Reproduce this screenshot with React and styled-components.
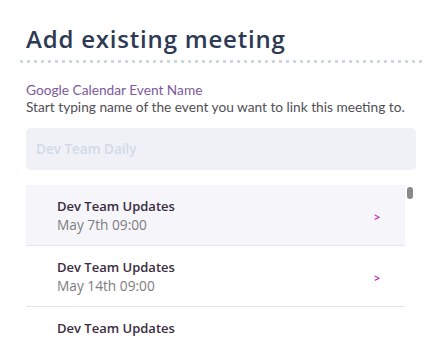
import React from 'react';
import styled, { createGlobalStyle } from 'styled-components';

const GlobalStyle = createGlobalStyle`
    html, body {
        margin: 0;
        padding: 0;
        background: #ffffff;
    }
    body {
        font-family: 'Lato', 'Open Sans', sans-serif;
    }
`;

const Page = styled.div`
    height: 351px;
    overflow: hidden;
    padding: 22px 27px 0 26px;
    box-sizing: border-box;
`;

const Title = styled.h1`
    font-family: 'Open Sans', sans-serif;
    font-weight: 600;
    font-size: 24px;
    letter-spacing: 0.8px;
    color: #2d3a55;
    margin: 0;
    line-height: 34px;
`;

const Divider = styled.div`
    margin: 4px -8px 0 -8px;
    height: 3px;
    background-image: radial-gradient(circle, #cdd7e3 1.4px, transparent 1.6px);
    background-size: 7px 3px;
    background-repeat: repeat-x;
`;

const Label = styled.div`
    margin-top: 18px;
    font-size: 13.7px;
    line-height: 17px;
    color: #7d5a9c;
`;

const Hint = styled.div`
    font-size: 13.7px;
    line-height: 17px;
    color: #4f4f55;
`;

const SearchInput = styled.input`
    display: block;
    box-sizing: border-box;
    width: 100%;
    height: 42px;
    margin-top: 13px;
    border: none;
    border-radius: 5px;
    background: #f0f1f7;
    padding: 0 10px;
    font-family: 'Open Sans', sans-serif;
    font-weight: 600;
    font-size: 13.5px;
    color: #333;
    outline: none;

    &::placeholder {
        color: #d2d9e7;
    }
`;

const ListArea = styled.div`
    display: flex;
    margin-top: 15px;
`;

const List = styled.div`
    flex: 1;
    display: flex;
    flex-direction: column;
    height: 151px;
    overflow: hidden;
`;

const Item = styled.div`
    flex: none;
    display: flex;
    align-items: center;
    justify-content: space-between;
    height: 60px;
    padding: 0 25px 0 31px;
    background: ${p => (p.$active ? '#f6f5fa' : '#ffffff')};
    border-bottom: 1px solid #e6e5ea;
`;

const ItemText = styled.div`
    display: flex;
    flex-direction: column;
`;

const ItemName = styled.span`
    font-family: 'Open Sans', sans-serif;
    font-weight: 600;
    font-size: 13px;
    line-height: 18px;
    color: #3b2c40;
`;

const ItemDate = styled.span`
    font-family: 'Open Sans', sans-serif;
    font-size: 13.7px;
    line-height: 19px;
    color: #7d7d80;
`;

const Chevron = styled.span`
    font-family: 'Open Sans', sans-serif;
    font-weight: 700;
    font-size: 10px;
    color: #c42db9;
    margin-top: 4px;
`;

const Track = styled.div`
    width: 11px;
    padding: 2px 0 0 2px;
    box-sizing: border-box;
`;

const Thumb = styled.div`
    width: 6px;
    height: 12px;
    border-radius: 3px;
    background: #8a8a8a;
`;

const events = [
    { name: 'Dev Team Updates', date: 'May 7th 09:00' },
    { name: 'Dev Team Updates', date: 'May 14th 09:00' },
    { name: 'Dev Team Updates', date: 'May 21st 09:00' },
];

const App = () => (
    <>
        <GlobalStyle />
        <Page>
            <Title>Add existing meeting</Title>
            <Divider />
            <Label>Google Calendar Event Name</Label>
            <Hint>Start typing name of the event you want to link this meeting to.</Hint>
            <SearchInput placeholder="Dev Team Daily" />
            <ListArea>
                <List>
                    {events.map((ev, i) => (
                        <Item key={i} $active={i === 0}>
                            <ItemText>
                                <ItemName>{ev.name}</ItemName>
                                <ItemDate>{ev.date}</ItemDate>
                            </ItemText>
                            <Chevron>&gt;</Chevron>
                        </Item>
                    ))}
                </List>
                <Track>
                    <Thumb />
                </Track>
            </ListArea>
        </Page>
    </>
);

export default App;
